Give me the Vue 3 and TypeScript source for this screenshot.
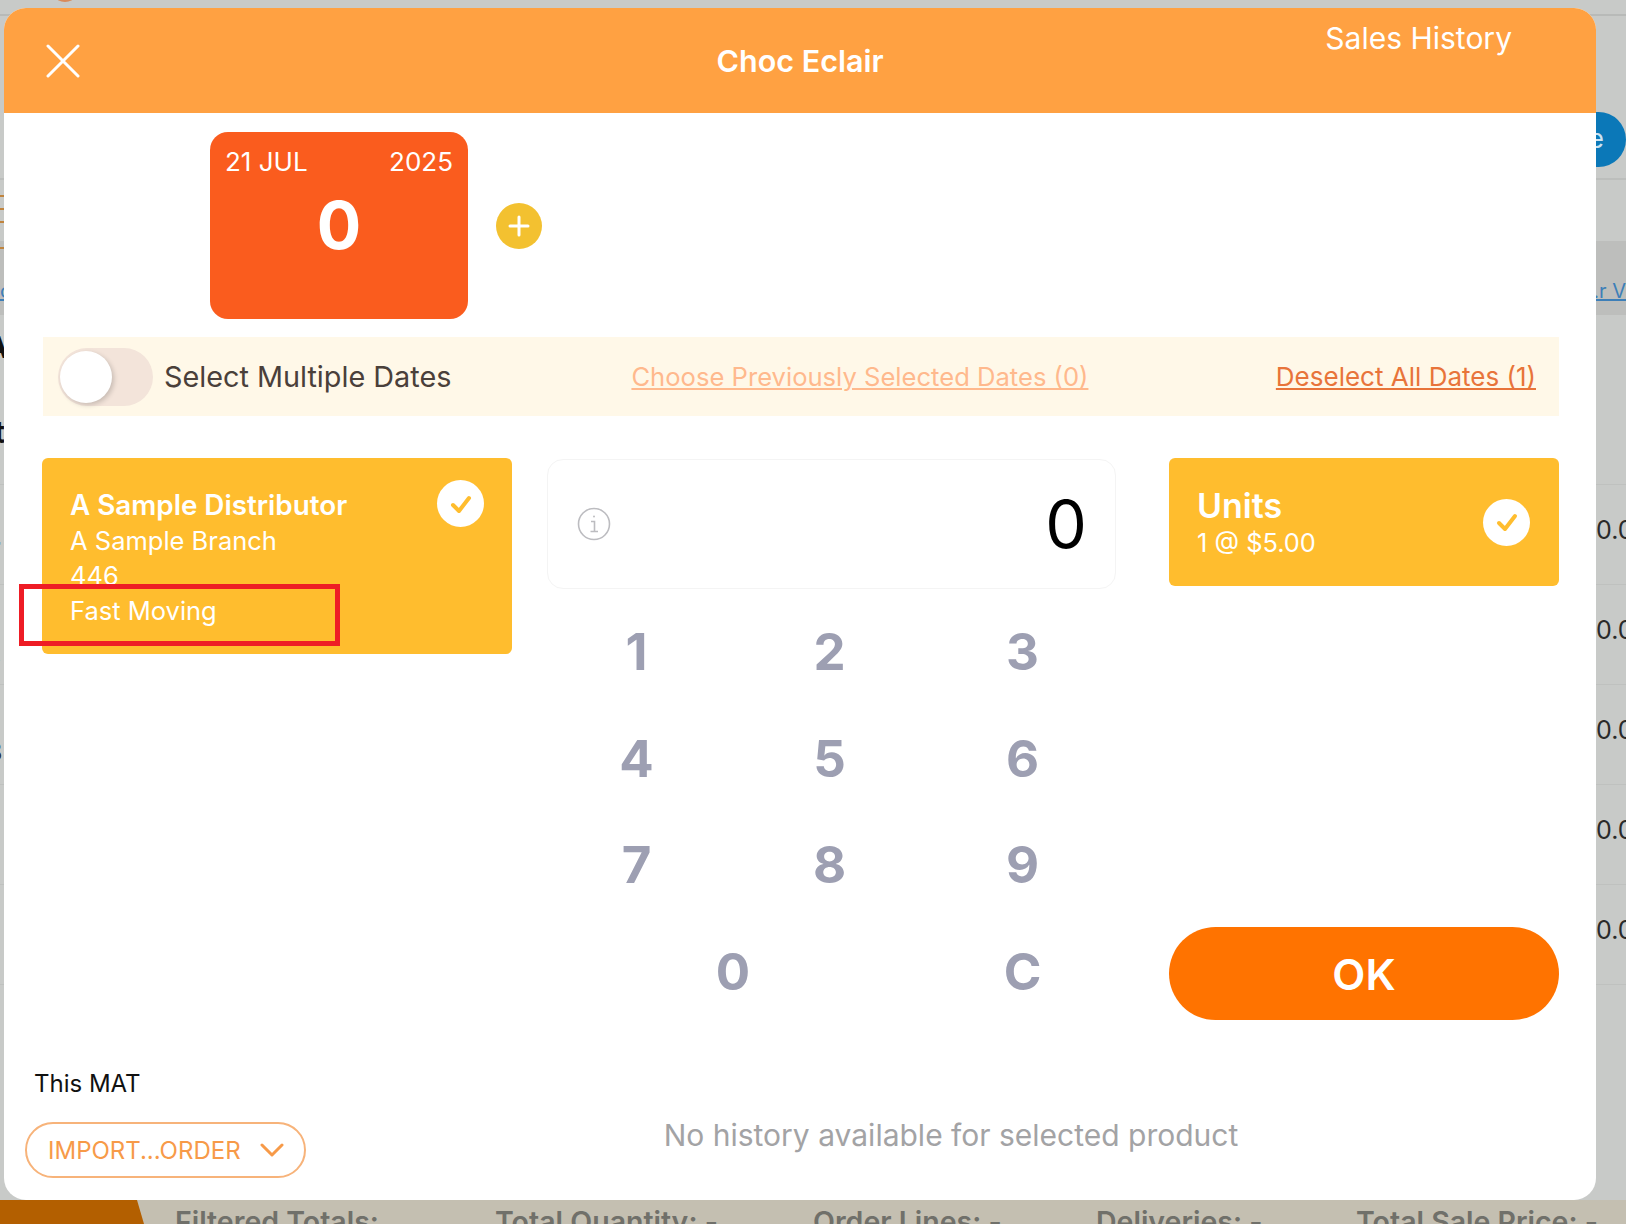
<script setup lang="ts">
const keys: { label: string; wide?: boolean }[] = [
  { label: '1' }, { label: '2' }, { label: '3' },
  { label: '4' }, { label: '5' }, { label: '6' },
  { label: '7' }, { label: '8' }, { label: '9' },
  { label: '0', wide: true }, { label: 'C' },
]

const backRows = [
  { left: '7', right: '0.00' },
  { left: 'x', right: '0.00' },
  { left: '8', right: '0.00' },
  { left: '1', right: '0.00' },
  { left: '1', right: '0.00' },
]

const totals = [
  { label: 'Filtered Totals:', width: 320 },
  { label: 'Total Quantity: -', width: 318 },
  { label: 'Order Lines: -', width: 283 },
  { label: 'Deliveries: -', width: 260 },
  { label: 'Total Sale Price: -', width: 250 },
]
</script>

<template>
  <div class="page">
    <!-- page behind the dialog, only its edges show -->
    <div class="back">
      <div class="back-top"><span class="back-dot"></span></div>
      <div class="back-bar">
        <div class="pill">e</div>
      </div>
      <div class="dashes"><i></i><i></i><i></i><i></i></div>
      <div class="back-band">
        <span class="band-link">c</span>
        <span class="band-link">...r V</span>
      </div>
      <div class="back-head">
        <span>A</span>
        <span class="head-t">t</span>
      </div>
      <div v-for="(row, i) in backRows" :key="i" class="back-row">
        <span class="row-left">{{ row.left }}</span>
        <span class="row-right">{{ row.right }}</span>
      </div>
      <div class="totals">
        <div class="totals-tab"></div>
        <span v-for="t in totals" :key="t.label" class="total" :style="{ width: t.width + 'px' }">{{ t.label }}</span>
      </div>
    </div>

    <div class="modal">
      <header class="head">
        <div class="close">
          <svg width="34" height="34" viewBox="0 0 34 34" fill="none" stroke="#fff" stroke-width="3" stroke-linecap="round">
            <path d="M2 2 L32 32 M32 2 L2 32" />
          </svg>
        </div>
        <div class="title">Choc Eclair</div>
        <div class="history">Sales History</div>
      </header>

      <div class="body">
        <div class="date-row">
          <div class="date-card">
            <div class="date-top"><span>21 JUL</span><span>2025</span></div>
            <div class="date-qty">0</div>
          </div>
          <div class="add">
            <svg width="24" height="24" viewBox="0 0 24 24" fill="none" stroke="#fff" stroke-width="3" stroke-linecap="round">
              <path d="M12 3 V21 M3 12 H21" />
            </svg>
          </div>
        </div>

        <div class="strip">
          <div class="toggle"><div class="knob"></div></div>
          <span class="toggle-label">Select Multiple Dates</span>
          <a class="link-off">Choose Previously Selected Dates (0)</a>
          <a class="link-on">Deselect All Dates (1)</a>
        </div>

        <div class="main">
          <div class="supplier">
            <div class="supplier-name">A Sample Distributor</div>
            <div>A Sample Branch</div>
            <div>446</div>
            <div>Fast Moving</div>
            <div class="tick tick-corner">
              <svg width="24" height="24" viewBox="0 0 24 24" fill="none" stroke="#ffbd2e" stroke-width="4" stroke-linecap="round" stroke-linejoin="round">
                <path d="M4 13 L10 19 L20 6" />
              </svg>
            </div>
          </div>

          <div class="center">
            <div class="display">
              <svg width="34" height="34" viewBox="0 0 34 34" fill="none" stroke="#bcbcc0" stroke-width="1.6">
                <circle cx="17" cy="17" r="15.5" />
                <path d="M14 14.5 H17.5 V24.5 M13.5 24.5 H21" />
                <circle cx="17" cy="9.5" r="1" fill="#bcbcc0" stroke="none" />
              </svg>
              <span class="display-value">0</span>
            </div>
            <div class="keypad">
              <div v-for="k in keys" :key="k.label" class="key" :class="{ wide: k.wide }">{{ k.label }}</div>
            </div>
          </div>

          <div class="right">
            <div class="units">
              <div>
                <div class="units-name">Units</div>
                <div class="units-price">1 @ $5.00</div>
              </div>
              <div class="tick">
                <svg width="24" height="24" viewBox="0 0 24 24" fill="none" stroke="#ffbd2e" stroke-width="4" stroke-linecap="round" stroke-linejoin="round">
                  <path d="M4 13 L10 19 L20 6" />
                </svg>
              </div>
            </div>
            <button class="ok" type="button">OK</button>
          </div>
        </div>
      </div>

      <footer class="foot">
        <div class="foot-left">
          <div class="mat">This MAT</div>
          <div class="select">
            <span>IMPORT...ORDER</span>
            <svg width="24" height="14" viewBox="0 0 24 14" fill="none" stroke="#f79a48" stroke-width="3" stroke-linecap="round" stroke-linejoin="round">
              <path d="M2 2 L12 12 L22 2" />
            </svg>
          </div>
        </div>
        <div class="no-history">No history available for selected product</div>
      </footer>
    </div>

    <!-- annotation drawn over the screenshot -->
    <div class="marker"></div>
  </div>
</template>

<style>
html, body {
  margin: 0;
  background: #c8cac8;
}
</style>

<style scoped>
.page {
  position: relative;
  width: 1626px;
  height: 1224px;
  overflow: hidden;
  font-family: Inter, "Liberation Sans", sans-serif;
}

.back {
  display: flex;
  flex-direction: column;
  height: 100%;
  background: #c8cac8;
}
.back-top {
  flex: none;
  height: 16px;
  border-bottom: 2px solid #b8bab8;
  box-sizing: border-box;
  position: relative;
}
.back-dot {
  position: absolute;
  left: 56px;
  top: -8px;
  width: 18px;
  height: 10px;
  border-radius: 50%;
  background: #d98a5a;
}
.back-bar {
  flex: none;
  display: flex;
  justify-content: flex-end;
  align-items: flex-end;
  height: 164px;
  padding-bottom: 11px;
  border-bottom: 2px solid #bcbebc;
  box-sizing: border-box;
}
.pill {
  width: 100px;
  height: 55px;
  border-radius: 28px;
  background: #0b78b8;
  color: #cfe4f2;
  font-size: 26px;
  line-height: 53px;
  text-align: right;
  padding-right: 22px;
  box-sizing: border-box;
}
.dashes {
  flex: none;
  display: flex;
  flex-direction: column;
  height: 61px;
  box-sizing: border-box;
  padding-top: 15px;
  gap: 11px;
  position: relative;
  z-index: 1;
}
.dashes i {
  display: block;
  flex: none;
  width: 4px;
  height: 2px;
  background: #c0843e;
}
.dashes i:last-child {
  margin-top: 13px;
}
.back-band {
  flex: none;
  display: flex;
  justify-content: space-between;
  height: 74px;
  box-sizing: border-box;
  padding-top: 36px;
  background: #bdbebc;
  font-size: 20px;
  line-height: 28px;
  color: #3d7fb8;
}
.band-link {
  text-decoration: underline;
}
.back-head {
  flex: none;
  display: flex;
  flex-direction: column;
  height: 170px;
  padding-top: 16px;
  box-sizing: border-box;
  gap: 53px;
  font-size: 30px;
  font-weight: 700;
  color: #111;
  margin-left: -14px;
  line-height: 32px;
  border-bottom: 1px solid #bfc1bf;
}
.head-t {
  padding-left: 8px;
}
.back-row {
  flex: none;
  display: flex;
  justify-content: space-between;
  height: 100px;
  box-sizing: border-box;
  border-bottom: 1px solid #bfc1bf;
  font-size: 25px;
  color: #2a2a2a;
}
.row-left {
  margin-left: -13px;
  margin-top: 52px;
}
.row-right {
  width: 30px;
  overflow: hidden;
  margin-top: 30px;
}
.totals {
  margin-top: auto;
  display: flex;
  height: 24px;
  align-items: flex-start;
  background: #c4bfb1;
  overflow: hidden;
  padding-left: 175px;
  position: relative;
}
.totals-tab {
  position: absolute;
  left: 0;
  top: 0;
  width: 144px;
  height: 24px;
  background: #b35f00;
  clip-path: polygon(0 0, 137px 0, 144px 100%, 0 100%);
}
.total {
  flex: none;
  font-size: 28.5px;
  font-weight: 600;
  color: #70706a;
  line-height: 28px;
  margin-top: 8px;
  white-space: nowrap;
}

.modal {
  position: absolute;
  left: 4px;
  top: 8px;
  width: 1592px;
  height: 1192px;
  display: flex;
  flex-direction: column;
  background: #fff;
  border-radius: 22px;
  overflow: hidden;
}

.head {
  flex: none;
  display: grid;
  grid-template-columns: 1fr auto 1fr;
  align-items: center;
  height: 105px;
  background: #ffa142;
  color: #fff;
}
.close {
  padding-left: 42px;
  display: flex;
}
.title {
  font-size: 30.5px;
  font-weight: 600;
}
.history {
  justify-self: end;
  align-self: start;
  padding: 10px 84px 0 0;
  font-size: 30px;
  line-height: 40px;
}

.body {
  flex: none;
  padding: 19px 37px 0 39px;
}
.date-row {
  display: flex;
  align-items: center;
  gap: 28px;
  margin-left: 167px;
}
.date-card {
  width: 258px;
  height: 187px;
  box-sizing: border-box;
  padding: 14px 15px;
  border-radius: 18px;
  background: #fa5c1e;
  color: #fff;
}
.date-top {
  display: flex;
  justify-content: space-between;
  font-size: 26px;
  line-height: 32px;
}
.date-qty {
  text-align: center;
  font-size: 66px;
  font-weight: 700;
  line-height: 80px;
  margin-top: 7px;
}
.add {
  width: 46px;
  height: 46px;
  border-radius: 50%;
  background: #f3c130;
  display: flex;
  align-items: center;
  justify-content: center;
}

.strip {
  display: flex;
  align-items: center;
  height: 79px;
  margin-top: 18px;
  padding: 0 23px 0 15px;
  background: #fff8e8;
}
.toggle {
  width: 95px;
  height: 58px;
  border-radius: 29px;
  background: #f3e4da;
  display: flex;
  align-items: center;
  padding-left: 2px;
  box-sizing: border-box;
}
.knob {
  width: 52px;
  height: 52px;
  border-radius: 50%;
  background: #fff;
  box-shadow: 2px 2px 5px rgba(0, 0, 0, 0.18);
}
.toggle-label {
  margin-left: 11px;
  font-size: 28.8px;
  color: #4a403a;
}
.link-off,
.link-on {
  text-decoration: underline;
}
.link-off {
  margin-left: 180px;
  font-size: 25.6px;
  color: #ffb98d;
}
.link-on {
  margin-left: auto;
  font-size: 26px;
  color: #e8743a;
}

.main {
  display: flex;
  height: 562px;
  margin-top: 42px;
}
.supplier {
  position: relative;
  flex: none;
  width: 470px;
  height: 196px;
  margin-left: -1px;
  box-sizing: border-box;
  padding: 30px 28px 0;
  border-radius: 6px;
  background: #ffbd2e;
  color: #fff;
  font-size: 25.5px;
  line-height: 35px;
}
.supplier-name {
  font-size: 27.8px;
  font-weight: 600;
}
.tick {
  width: 47px;
  height: 47px;
  border-radius: 50%;
  background: #fff;
  display: flex;
  align-items: center;
  justify-content: center;
}
.tick-corner {
  position: absolute;
  top: 22px;
  right: 28px;
}

.center {
  flex: none;
  width: 569px;
  margin-left: 35px;
  padding-top: 1px;
}
.display {
  display: flex;
  align-items: center;
  justify-content: space-between;
  height: 130px;
  box-sizing: border-box;
  padding: 0 28px 0 29px;
  border: 1px solid #f4f4f4;
  border-radius: 16px;
}
.display-value {
  font-size: 66px;
  color: #000;
}
.keypad {
  display: grid;
  grid-template-columns: repeat(6, 96.5px);
  grid-auto-rows: 106.7px;
  margin: 9px 0 0 -7px;
}
.key {
  grid-column: span 2;
  display: flex;
  align-items: center;
  justify-content: center;
  font-size: 51px;
  font-weight: 700;
  color: #9d9fb2;
}
.key.wide {
  grid-column: span 4;
}

.right {
  flex: none;
  width: 390px;
  margin-left: 53px;
  display: flex;
  flex-direction: column;
  justify-content: space-between;
}
.units {
  display: flex;
  align-items: center;
  justify-content: space-between;
  height: 128px;
  box-sizing: border-box;
  padding: 2px 29px 0 28px;
  border-radius: 6px;
  background: #ffbd2e;
  color: #fff;
}
.units .tick {
  margin-top: -2px;
}
.units-name {
  font-size: 34px;
  font-weight: 600;
  line-height: 40px;
}
.units-price {
  font-size: 25.4px;
  line-height: 34px;
}
.ok {
  height: 93px;
  border: 0;
  border-radius: 47px;
  background: #ff7300;
  color: #fff;
  font-family: inherit;
  font-size: 43px;
  font-weight: 600;
  padding: 0;
}

.foot {
  flex: none;
  display: flex;
  margin-top: 46px;
  padding-left: 21px;
}
.foot-left {
  flex: none;
  width: 281px;
}
.mat {
  padding: 2px 0 0 9px;
  font-size: 24px;
  line-height: 32px;
  color: #111;
}
.select {
  display: flex;
  align-items: center;
  justify-content: space-between;
  height: 56px;
  margin-top: 22px;
  box-sizing: border-box;
  padding: 0 20px 0 21px;
  border: 2px solid #f7b37a;
  border-radius: 28px;
  color: #f79a48;
  font-size: 24px;
}
.no-history {
  flex: 1;
  padding-top: 52px;
  text-align: center;
  font-size: 30px;
  line-height: 34px;
  color: #a3a3a5;
}

.marker {
  position: absolute;
  left: 19px;
  top: 584px;
  width: 321px;
  height: 62px;
  box-sizing: border-box;
  border: 5px solid #ee1c25;
}
</style>
